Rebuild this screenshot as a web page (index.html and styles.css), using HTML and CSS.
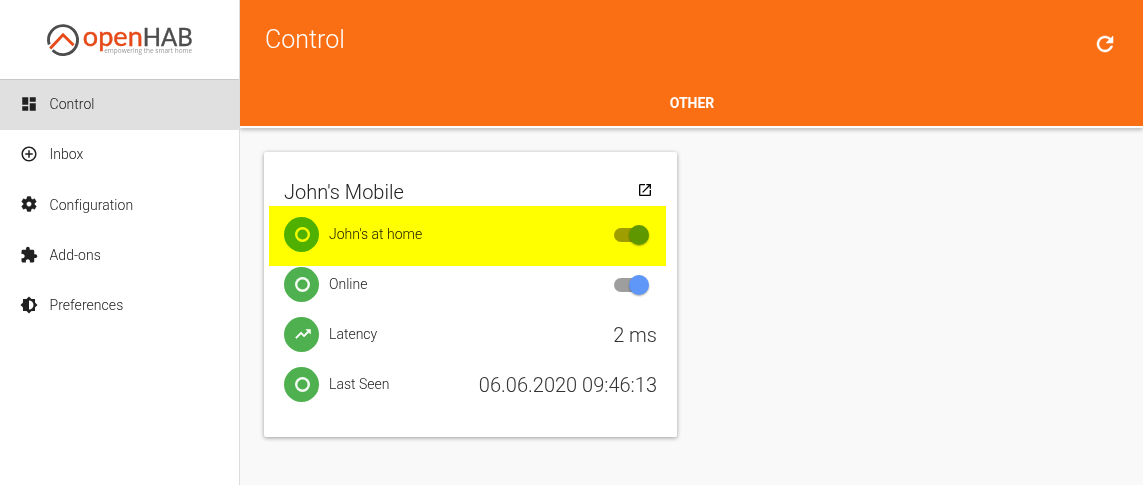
FILE: index.html
```html
<!DOCTYPE html>
<html lang="en">
<head>
<meta charset="utf-8">
<title>openHAB</title>
<link rel="stylesheet" href="styles.css">
</head>
<body>
<div class="app">
  <aside class="sidebar">
    <div class="brand">
      <svg class="logo" width="160" height="50" viewBox="40 15 160 50">
        <path d="M49.200 44.500A14.500 14.500 0 1 1 52.700 50.300" fill="none" stroke="#4d4d4d" stroke-width="2.900"/>
        <path d="M50.200 48.400L63 34.800L73.600 45.200" fill="none" stroke="#e64a19" stroke-width="2.900"/>
        <text class="logo-open" x="82.800" y="46.400" textLength="60" lengthAdjust="spacingAndGlyphs">open</text>
        <text class="logo-hab" x="142.800" y="46.400" textLength="50" lengthAdjust="spacingAndGlyphs">HAB</text>
        <text class="logo-tag" x="104.200" y="52.800" textLength="88" lengthAdjust="spacingAndGlyphs">empowering the smart home</text>
      </svg>
    </div>
    <nav class="nav">
      <a class="nav-item active"><svg class="icon" viewBox="0 0 24 24"><path d="M3 13h8V3H3v10zm0 8h8v-6H3v6zm10 0h8V11h-8v10zm0-18v6h8V3h-8z"/></svg>Control</a>
      <a class="nav-item"><svg class="icon" viewBox="0 0 24 24"><path d="M13 7h-2v4H7v2h4v4h2v-4h4v-2h-4V7zm-1-5C6.480 2 2 6.480 2 12s4.480 10 10 10 10-4.480 10-10S17.520 2 12 2zm0 18c-4.410 0-8-3.590-8-8s3.590-8 8-8 8 3.590 8 8-3.590 8-8 8z"/></svg>Inbox</a>
      <a class="nav-item"><svg class="icon gear" viewBox="0 0 24 24"><path d="M19.430 12.980c.040-.320.070-.640.070-.980s-.030-.660-.070-.980l2.110-1.650c.190-.150.240-.420.120-.640l-2-3.460c-.120-.220-.390-.300-.610-.220l-2.490 1c-.520-.400-1.080-.730-1.690-.980l-.380-2.650C14.460 2.180 14.250 2 14 2h-4c-.250 0-.460.180-.490.420l-.380 2.650c-.610.250-1.170.590-1.690.980l-2.490-1c-.230-.090-.490 0-.610.220l-2 3.460c-.130.220-.070.490.120.640l2.110 1.650c-.040.320-.070.650-.070.980s.030.660.070.980l-2.110 1.650c-.190.150-.240.420-.120.640l2 3.460c.120.220.390.300.610.220l2.490-1c.520.400 1.080.730 1.690.980l.380 2.650c.030.240.240.420.490.420h4c.250 0 .460-.180.490-.420l.380-2.650c.610-.250 1.170-.590 1.690-.980l2.490 1c.230.090.490 0 .610-.220l2-3.460c.120-.220.070-.490-.120-.640l-2.110-1.650zM12 15.500c-1.930 0-3.500-1.570-3.500-3.500s1.570-3.500 3.500-3.500 3.500 1.570 3.500 3.500-1.570 3.500-3.500 3.500z"/></svg>Configuration</a>
      <a class="nav-item"><svg class="icon" viewBox="0 0 24 24"><path d="M20.500 11H19V7c0-1.100-.900-2-2-2h-4V3.500C13 2.120 11.880 1 10.500 1S8 2.120 8 3.500V5H4c-1.100 0-1.990.900-1.990 2v3.800H3.500c1.490 0 2.700 1.210 2.700 2.700s-1.210 2.700-2.700 2.700H2V20c0 1.100.900 2 2 2h3.800v-1.500c0-1.490 1.210-2.700 2.700-2.700 1.490 0 2.700 1.210 2.700 2.700V22H17c1.100 0 2-.900 2-2v-4h1.500c1.380 0 2.500-1.120 2.500-2.500S21.880 11 20.500 11z"/></svg>Add-ons</a>
      <a class="nav-item"><svg class="icon" viewBox="0 0 24 24"><path d="M20 15.310L23.310 12 20 8.690V4h-4.690L12 .690 8.690 4H4v4.690L.690 12 4 15.310V20h4.690L12 23.310 15.310 20H20v-4.690zM12 18V6c3.310 0 6 2.690 6 6s-2.690 6-6 6z"/></svg>Preferences</a>
    </nav>
  </aside>
  <main class="main">
    <header class="header">
      <div class="title-row">
        <h1 class="title">Control</h1>
        <svg class="refresh" viewBox="0 0 24 24"><path d="M17.650 6.350C16.200 4.900 14.210 4 12 4c-4.420 0-7.990 3.580-7.990 8s3.570 8 7.990 8c3.730 0 6.840-2.550 7.730-6h-2.080c-.820 2.330-3.040 4-5.650 4-3.310 0-6-2.690-6-6s2.690-6 6-6c1.660 0 3.140.690 4.220 1.780L13 11h7V4l-2.350 2.350z"/></svg>
      </div>
      <div class="tab">OTHER</div>
    </header>
    <section class="content">
      <article class="card">
        <div class="card-head">
          <h2 class="card-title">John's Mobile</h2>
          <svg class="open" viewBox="0 0 24 24"><path d="M19 19H5V5h7V3H5c-1.110 0-2 .900-2 2v14c0 1.100.890 2 2 2h14c1.100 0 2-.900 2-2v-7h-2v7zM14 3v2h3.590l-9.830 9.830 1.410 1.410L19 6.410V10h2V3h-7z"/></svg>
        </div>
        <div class="row highlighted"><span class="badge"><i class="ring"></i></span><span class="label">John's at home</span><span class="switch"><i class="thumb"></i></span></div>
        <div class="row"><span class="badge"><i class="ring"></i></span><span class="label">Online</span><span class="switch"><i class="thumb"></i></span></div>
        <div class="row"><span class="badge"><svg class="trend" viewBox="0 0 24 24"><path d="M16 6l2.290 2.290-4.880 4.880-4-4L2 16.590 3.410 18l6-6 4 4 6.300-6.290L22 12V6z"/></svg></span><span class="label">Latency</span><span class="value">2 ms</span></div>
        <div class="row"><span class="badge"><i class="ring"></i></span><span class="label">Last Seen</span><span class="value">06.06.2020 09:46:13</span></div>
      </article>
    </section>
  </main>
</div>
</body>
</html>
```
FILE: styles.css
```css
* { box-sizing: border-box; }
body { margin: 0; font-family: Roboto, "Liberation Sans", sans-serif; font-weight: 300; color: #212121; }
.app { display: flex; width: 1143px; height: 485px; overflow: hidden; }
.sidebar { width: 240px; background: #fff; border-right: 1px solid #dcdcdc; }
.brand { height: 80px; padding: 15px 0 0 40px; border-bottom: 1px solid #c8c8c8; }
.logo { display: block; }
.logo-open, .logo-hab { font-family: Lato, sans-serif; font-weight: 400; stroke-width: .4px; }
.logo-open { font-size: 26px; fill: #e64a19; stroke: #e64a19; }
.logo-hab { font-size: 24.5px; fill: #4d4d4d; stroke: #4d4d4d; }
.logo-tag { font-family: "Open Sans", sans-serif; font-size: 7px; font-weight: 400; fill: #999; }
.nav-item { display: flex; align-items: center; gap: 11.500px; height: 50.3px; padding: 0 0 2px 20px; font-size: 14px; letter-spacing: .05px; }
.active { background: #e0e0e0; }
.icon { width: 18px; height: 18px; fill: #212121; }
.gear { margin-top: -1px; stroke: #212121; stroke-width: .5px; }
.main { flex: 1; display: flex; flex-direction: column; background: #f9f9f9; }
.header { height: 128px; background: #fa6f14; color: #fff; border-bottom: 2px solid #fff; box-shadow: 0 2px 4px rgba(0,0,0,.25); clip-path: inset(0 0 -8px 0); }
.title-row { display: flex; justify-content: space-between; align-items: center; height: 80px; padding: 0 26px 0 25px; }
.title { margin: -2px 0 0; font-size: 25px; font-weight: 300; }
.refresh { width: 24px; height: 24px; margin-top: 8px; fill: #fff; stroke: #fff; stroke-width: .5px; }
.tab { height: 46px; padding-left: 1px; line-height: 46px; text-align: center; font-size: 14px; font-weight: 700; letter-spacing: -.05px; }
.content { padding: 24px; }
.card { width: 413px; height: 285px; padding: 20px; background: #fff; border-radius: 2px; box-shadow: 0 1px 4px rgba(0,0,0,.38); }
.card-head { display: flex; align-items: center; justify-content: space-between; height: 37px; padding-right: 4px; }
.card-title { margin: 3px 0 0; font-size: 20px; font-weight: 300; }
.open { width: 16px; height: 16px; margin-top: -2px; fill: #000; }
.row { position: relative; display: flex; align-items: center; height: 50px; }
.highlighted::after { content: ""; position: absolute; left: -15px; right: -9px; top: -3px; height: 60px; background: #ff0; mix-blend-mode: multiply; }
.badge { display: flex; align-items: center; justify-content: center; width: 35px; height: 35px; border-radius: 50%; background: #4fb04f; }
.ring { width: 15px; height: 15px; margin: 1px 0 0 1px; border: 2.500px solid #fff; border-radius: 50%; }
.ring { border-width: 0; box-shadow: inset 0 0 0 2.400px #f4fbf4; }
.trend { width: 18px; height: 18px; margin-left: 2px; fill: #fff; stroke: #fff; stroke-width: .8px; }
.label { margin-left: 10px; font-size: 14px; }
.value { margin: 2px 0 0 auto; font-size: 20px; color: #333; }
.switch { position: relative; width: 34px; height: 14px; margin: 1px 9px 0 auto; border-radius: 7px; background: #9e9e9e; }
.thumb { position: absolute; right: -1px; top: -3px; width: 20px; height: 20px; border-radius: 50%; background: #5e97f8; box-shadow: 0 1px 2px rgba(0,0,0,.35); }
```
